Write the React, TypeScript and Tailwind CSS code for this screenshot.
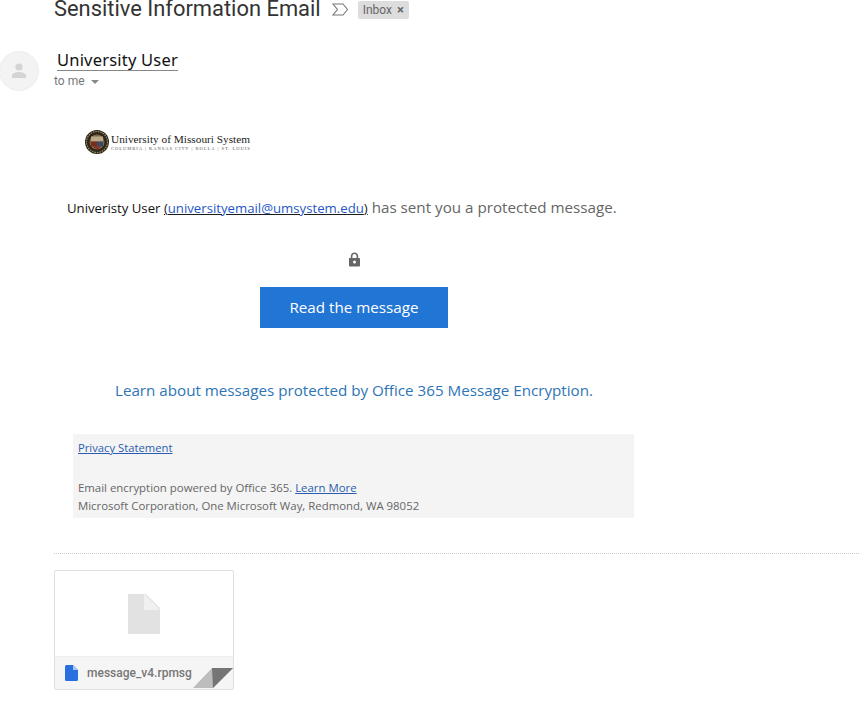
function Seal() {
  return (
    <svg width="24" height="24" viewBox="0 0 24 24" className="shrink-0">
      <circle cx="12" cy="12" r="12" fill="#2b2620" />
      <circle cx="12" cy="12" r="10.5" fill="none" stroke="#a98f4e" strokeWidth="1.2" strokeDasharray="1.5 1" />
      <circle cx="12" cy="12" r="7.5" fill="#7d6a3c" />
      <rect x="6" y="6.5" width="12" height="5" fill="#b9a98a" />
      <rect x="6" y="11.5" width="6" height="5" fill="#7c2b23" />
      <rect x="12" y="11.5" width="6" height="5" fill="#3c4a63" />
      <path d="M8 16.5 L12 20 L16 16.5 Z" fill="#8c2f25" />
    </svg>
  );
}

function FileGlyph({ className, fold }: { className: string; fold: string }) {
  return (
    <svg viewBox="0 0 32 40" className={className}>
      <path d="M0 0H16V16H32V40H0Z" fill={fold} />
      <path d="M16 0L32 16H16Z" fill="#f0f0f0" />
      <path d="M16 0H18L32 14V16Z" fill={fold} />
    </svg>
  );
}

export default function App() {
  return (
    <div className="relative h-[709px] w-[861px] overflow-hidden bg-white font-['Open_Sans',sans-serif]">
      {/* subject line, cut off by the top of the window */}
      <div className="-mt-[3px] flex h-[23px] items-center pl-[54px]">
        <h1 className="font-['Roboto',sans-serif] text-[21.9px] leading-[26px] font-normal text-[#333]">
          Sensitive Information Email
        </h1>
        <svg width="17" height="13" viewBox="0 0 17 13" className="mt-[2px] ml-[11px]" fill="none" stroke="#777" strokeWidth="1.1">
          <path d="M1 1H11L15.5 6.5L11 12H1L5.5 6.5Z" />
        </svg>
        <div className="mt-[2px] ml-[9px] flex h-[18px] items-center gap-[5px] rounded-[2px] bg-[#dddddd] px-[5px] font-['Roboto',sans-serif] text-[12px] text-[#666]">
          <span>Inbox</span>
          <span className="text-[13px] leading-none font-bold">×</span>
        </div>
      </div>

      {/* sender */}
      <div className="mt-[31px] flex">
        <div className="-ml-[1px] flex h-[40px] w-[40px] items-center justify-center rounded-full border border-[#ededed] bg-[#f3f3f3]">
          <svg width="18" height="18" viewBox="0 0 18 18" fill="#d4d4d4">
            <circle cx="9" cy="5" r="3.6" />
            <path d="M2 16V13.5C2 11.4 6 10 9 10S16 11.4 16 13.5V16Z" />
          </svg>
        </div>
        <div className="-mt-[3px] ml-[15px]">
          <div className="ml-[3px] inline-block border-b border-[#888] font-['Noto_Sans',sans-serif] text-[16.5px] leading-[21px] tracking-[0.2px] text-[#111]">
            University User
          </div>
          <div className="mt-[1px] flex items-center font-['Roboto',sans-serif] text-[12px] leading-[16px] text-[#777]">
            to me
            <span className="mt-[1px] ml-[6px] h-0 w-0 border-x-[4px] border-t-[4px] border-x-transparent border-t-[#888]" />
          </div>
        </div>
      </div>

      {/* logo */}
      <div className="mt-[38px] ml-[85px] flex h-[26px] w-[170px] items-center gap-[2px]">
        <Seal />
        <div className="whitespace-nowrap font-['Liberation_Serif',serif] text-[#222]">
          <div className="text-[11.3px] leading-[13px]">University of Missouri System</div>
          <div className="text-[4.6px] leading-[6px] tracking-[0.95px] text-[#555]">COLUMBIA | KANSAS CITY | ROLLA | ST. LOUIS</div>
        </div>
      </div>

      {/* message */}
      <p className="mt-[42px] ml-[67px] whitespace-nowrap text-[15.2px] leading-[20px] text-[#666]">
        <span className="text-[13.2px] text-[#111]">Univeristy User </span>
        <span className="text-[13.2px] text-[#1a1a1a] underline">
          (<span className="text-[#1f56c4]">universityemail@umsystem.edu</span>)
        </span>{' '}
        has sent you a protected message.
      </p>

      <div className="mt-[34px] ml-[260px] flex w-[188px] flex-col items-center">
        <svg width="15" height="15" viewBox="0 0 15 15" fill="#666">
          <path
            fillRule="evenodd"
            d="M7.5 0.5C5.2 0.5 3.8 2.2 3.8 4.4V6H2.5C2 6 2 6.3 2 6.8V13.7C2 14.2 2.3 14.5 2.8 14.5H12.2C12.7 14.5 13 14.2 13 13.7V6.8C13 6.3 12.7 6 12.2 6H11.2V4.4C11.2 2.2 9.8 0.5 7.5 0.5ZM7.5 2C8.8 2 9.6 3 9.6 4.4V6H5.4V4.4C5.4 3 6.2 2 7.5 2ZM7.5 8.6A1.5 1.5 0 1 1 7.5 11.6A1.5 1.5 0 1 1 7.5 8.6Z"
          />
        </svg>
        <div className="mt-[20px] flex h-[41px] w-full items-center justify-center bg-[#2175d5] text-[15.2px] text-white">
          Read the message
        </div>
      </div>

      <p className="mt-[52px] ml-[115px] whitespace-nowrap text-[15.18px] leading-[20px] text-[#2e75b6]">
        Learn about messages protected by Office 365 Message Encryption.
      </p>

      {/* footer box */}
      <div className="mt-[34px] ml-[73px] h-[84px] w-[561px] bg-[#f4f4f4] pt-[5px] pl-[5px] text-[11.4px] leading-[18px] text-[#666]">
        <a className="text-[11.25px] text-[#2a5db0] underline">Privacy Statement</a>
        <div className="mt-[22px]">
          Email encryption powered by Office 365. <a className="text-[#2a5db0] underline">Learn More</a>
        </div>
        <div>Microsoft Corporation, One Microsoft Way, Redmond, WA 98052</div>
      </div>

      <div className="mt-[35px] mr-[2px] ml-[54px] border-t border-dotted border-[#c8c8c8]" />

      {/* attachment */}
      <div className="relative mt-[16px] ml-[54px] h-[120px] w-[180px] overflow-hidden rounded-[2px] border border-[#dfdfdf] bg-white">
        <div className="flex h-[85px] items-center justify-center">
          <FileGlyph className="mt-[1px] h-[40px] w-[32px]" fold="#e2e2e2" />
        </div>
        <div className="flex h-[33px] items-center border-t border-[#eeeeee] bg-[#f5f5f5] pl-[10px]">
          <svg width="13" height="16" viewBox="0 0 13 16" className="shrink-0">
            <path d="M1.5 0H8L13 5V14.5A1.5 1.5 0 0 1 11.5 16H1.5A1.5 1.5 0 0 1 0 14.5V1.5A1.5 1.5 0 0 1 1.5 0Z" fill="#2a6fe0" />
            <path d="M8 0L13 5H8Z" fill="#a9c6f5" />
          </svg>
          <span className="ml-[9px] font-['Roboto',sans-serif] text-[12px] font-medium text-[#777]">message_v4.rpmsg</span>
        </div>
        <svg width="40" height="21" viewBox="0 0 40 21" className="absolute right-0 bottom-0">
          <path d="M20 20L40 0H19V0L0 20Z" fill="#bdbdbd" />
          <path d="M19 0H40L20 20Z" fill="#757575" />
        </svg>
      </div>
    </div>
  );
}
